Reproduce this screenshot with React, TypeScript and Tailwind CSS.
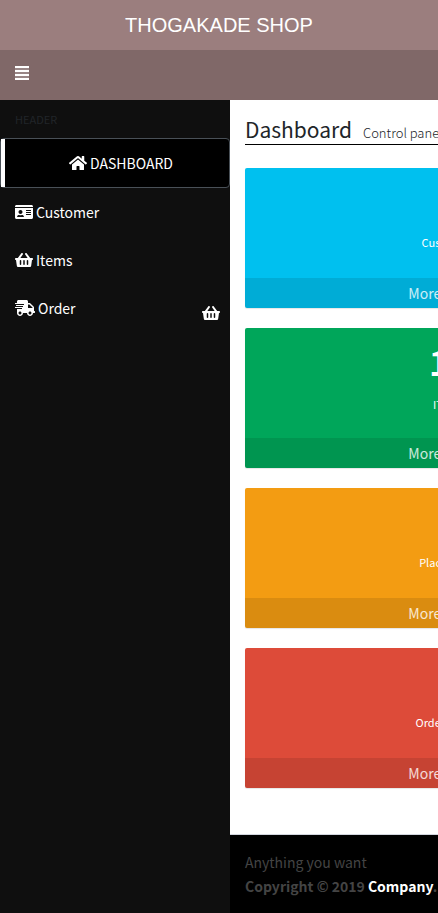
import type { ReactNode } from "react";
import { FaHome, FaIdCard, FaShoppingBasket, FaShippingFast, FaArrowCircleRight } from "react-icons/fa";

type Box = { label: string; count: string; color: string };

const boxes: Box[] = [
  { label: "Customers", count: "", color: "bg-[#00c0ef]" },
  { label: "ITEMS", count: "10", color: "bg-[#00a65a]" },
  { label: "Place Order", count: "", color: "bg-[#f39c12]" },
  { label: "Order Details", count: "", color: "bg-[#dd4b39]" },
];

function MenuIcon() {
  return (
    <svg viewBox="0 0 14 16" className="h-4 w-[14px]" aria-hidden="true">
      <path d="M0 1h14v14H0z" fill="#fff" opacity="0.2" />
      <path d="M0 1h14v2H0zM0 5h14v2H0zM0 9h14v2H0zM0 13h14v2H0z" fill="#fff" />
    </svg>
  );
}

function SideLink({ icon, label, trailing }: { icon: ReactNode; label: string; trailing?: ReactNode }) {
  return (
    <li>
      <a href="#" className="flex h-12 items-center gap-[3px] pr-[10px] pl-[15px] text-white">
        {icon}
        <span>{label}</span>
        {trailing}
      </a>
    </li>
  );
}

function InfoBox({ label, count, color }: Box) {
  return (
    <section className={`flex flex-col rounded-[2px] text-center text-white shadow-[0_1px_1px_rgba(0,0,0,0.1)] ${color}`}>
      <div className="flex h-[110px] flex-col items-center px-[10px] pt-2">
        <h3 className="min-h-[50px] text-[34px] leading-[52px] font-bold">{count}</h3>
        <p className="mt-[6px] text-[11px] leading-5">{label}</p>
      </div>
      <a href="#" className="flex h-[30px] items-center justify-center gap-[6px] rounded-b-[2px] bg-black/10 text-white/80">
        More info <FaArrowCircleRight />
      </a>
    </section>
  );
}

export default function App() {
  return (
    <div className="flex min-h-screen flex-col overflow-hidden bg-[#0f0f0f] font-['Noto_Sans_CJK_SC',sans-serif] text-sm leading-6">
      <header>
        <a href="#" className="flex h-[50px] items-center justify-center bg-[#9b7e7e] font-['Liberation_Sans',Arial,sans-serif] text-xl text-white">
          THOGAKADE SHOP
        </a>
        <nav className="flex h-[50px] items-center bg-[#806868] px-[15px]">
          <button type="button" aria-label="Toggle navigation" className="-mt-1">
            <MenuIcon />
          </button>
        </nav>
      </header>
      <div className="flex grow">
        <aside className="w-[230px] shrink-0">
          <p className="h-[38px] px-[15px] text-[11px] leading-[38px] text-[#212529]">HEADER</p>
          <button type="button" className="flex h-[50px] w-full items-center rounded border border-[#495057] bg-black text-white">
            <span className="w-1 self-stretch bg-white" />
            <span className="flex grow items-center justify-center gap-[3px] pl-[8px]">
              <FaHome className="h-4 w-[18px]" />
              <span>DASHBOARD</span>
            </span>
          </button>
          <ul>
            <SideLink icon={<FaIdCard className="h-4 w-[18px]" />} label="Customer" />
            <SideLink icon={<FaShoppingBasket className="h-4 w-[18px]" />} label="Items" />
            <SideLink
              icon={<FaShippingFast className="h-4 w-5" />}
              label="Order"
              trailing={<FaShoppingBasket className="mt-[10px] ml-auto h-4 w-[18px]" />}
            />
          </ul>
        </aside>
        <div className="flex w-full shrink-0 flex-col">
          <main className="grow bg-white px-[15px] pt-[15px]">
            <div className="flex h-[30px] items-baseline gap-[11px] border-b border-black text-[#212529]">
              <h1 className="text-[21px] leading-7 font-normal">Dashboard</h1>
              <small className="text-[13px] font-light">Control panel</small>
            </div>
            <div className="mt-[23px] flex flex-col gap-5">
              {boxes.map((box) => (
                <InfoBox key={box.label} {...box} />
              ))}
            </div>
          </main>
          <footer className="border-t border-[#d2d6de] bg-black p-[15px] text-[#444]">
            <div>Anything you want</div>
            <strong>
              Copyright © 2019 <a href="#" className="text-white">Company</a>.
            </strong>
          </footer>
        </div>
      </div>
    </div>
  );
}
